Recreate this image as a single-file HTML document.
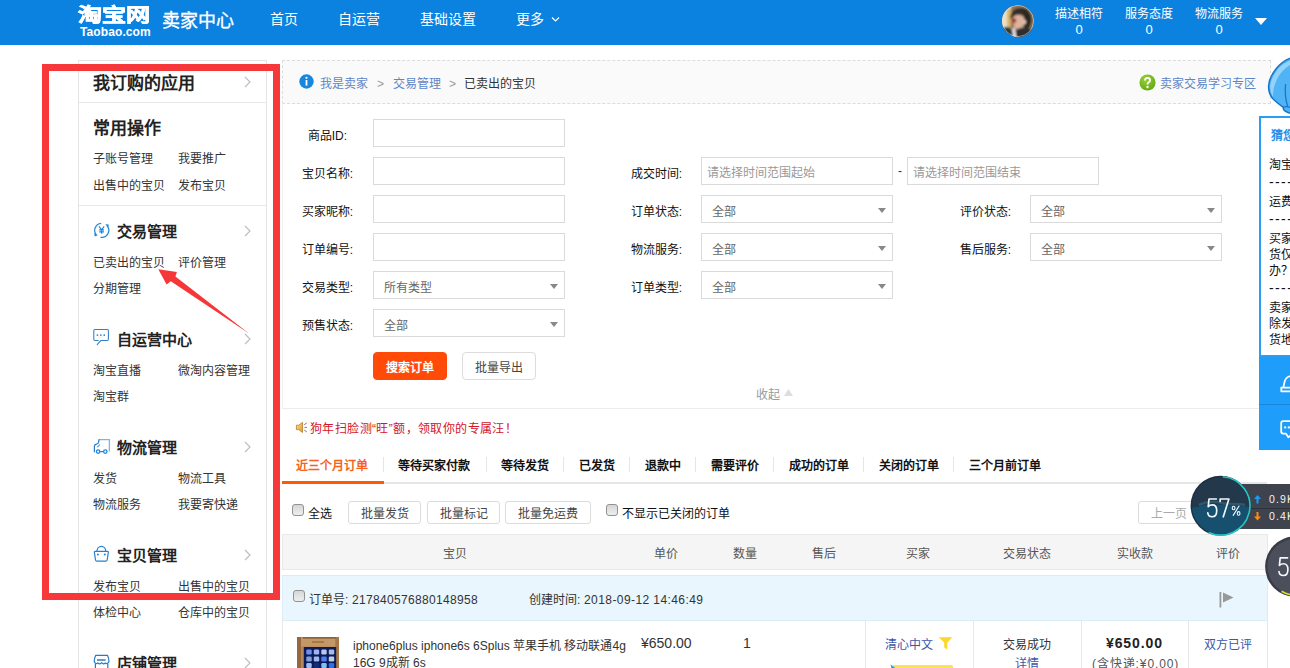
<!DOCTYPE html>
<html lang="zh-CN">
<head>
<meta charset="utf-8">
<title>卖家中心 - 已卖出的宝贝</title>
<style>
*{box-sizing:border-box;margin:0;padding:0}
html,body{width:1290px;height:668px;overflow:hidden;background:#fff}
body{font-family:"Liberation Sans",sans-serif;font-size:12px;color:#333;position:relative}
.abs{position:absolute;white-space:nowrap}
a{text-decoration:none;color:inherit}

/* header */
#hd{position:absolute;left:0;top:0;width:1290px;height:45px;background:#0b82e0;color:#fff}
#hd .logo-cn{left:78px;top:5px;font-size:19px;font-weight:bold;line-height:22px;transform:scaleX(1.27);transform-origin:0 0;-webkit-text-stroke:.6px #fff}
#hd .logo-en{left:80px;top:25px;font-size:12px;font-weight:bold;line-height:14px;letter-spacing:.1px}
#hd .title{left:162px;top:9px;font-size:18px;line-height:24px;-webkit-text-stroke:.35px #fff}
#hd .nav{top:10px;font-size:14px;line-height:18px}
#hd .stat{top:7px;font-size:12px;line-height:14px;text-align:center;width:60px}
#hd .stat b{display:block;font-weight:normal;font-size:13px;line-height:14px;margin-top:2px}
#hd .avatar{left:1002px;top:5px;width:32px;height:32px;border-radius:50%;overflow:hidden;background:#6b5a4e}

/* sidebar */
#side{position:absolute;left:78px;top:60px;width:189px;height:640px;border:1px solid #e4e4e4;background:#fff}
#side .h1{left:14px;font-size:17px;font-weight:bold;color:#222;line-height:20px}
#side .h2{left:38px;font-size:15px;font-weight:bold;color:#222;line-height:18px}
#side .lk{font-size:12px;color:#333;line-height:14px}
#side .c1{left:14px}
#side .c2{left:99px}
#side .hr{position:absolute;left:0;width:187px;height:1px;background:#e8e8e8}
#side .chev{position:absolute;left:164px;width:9px;height:12px}
#side .ico{position:absolute;left:14px;width:17px;height:17px}

/* main */
#crumb{position:absolute;left:282px;top:60px;width:989px;height:44px;background:#fafafa;border:1px dashed #dcdcdc}
#crumb .t{top:16px;font-size:12px;line-height:14px}
#form{position:absolute;left:282px;top:103px;width:986px;height:306px;background:linear-gradient(transparent 1px,#fff 1px);border-left:1px solid #f0f0f0;border-bottom:1px solid #ececec}
.lab{position:absolute;width:72px;text-align:right;font-size:12px;color:#111;line-height:14px;white-space:nowrap}
.inp{position:absolute;height:28px;border:1px solid #dadada;background:#fff;font-size:12px;color:#666;line-height:26px;padding-left:10px;white-space:nowrap}
.inp.ph{color:#999;padding-left:5px;line-height:30px}
.inp.sel{line-height:32px}
.inp.sel:after{content:"";position:absolute;right:6px;top:12px;border:4px solid transparent;border-top:5px solid #888;border-bottom:0}
.btn{position:absolute;height:28px;line-height:30px;text-align:center;border:1px solid #dcdcdc;border-radius:4px;background:#fff;color:#444;font-size:12px;white-space:nowrap}
.btn.pri{background:#ff4a08;border-color:#ff4a08;color:#fff}

/* tabs / toolbar / table */
#notice{position:absolute;left:295px;top:422px;letter-spacing:.4px;font-size:12px;line-height:15px;color:#d4142c;white-space:nowrap}
.tab{position:absolute;top:458px;font-size:12px;font-weight:bold;color:#111;line-height:16px;white-space:nowrap}
.tab.on{color:#f6621d}
.tsep{position:absolute;top:457px;width:1px;height:15px;background:#e6e6e6}
.cb{position:absolute;width:12px;height:12px;border:1px solid #929292;border-radius:3px;background:linear-gradient(#d6d6d6,#eeeeee)}
.sbtn{position:absolute;top:501px;height:23px;line-height:25px;border:1px solid #dcdcdc;border-radius:3px;background:#fff;color:#444;font-size:12px;text-align:center;white-space:nowrap}
.th{position:absolute;top:547px;font-size:12px;color:#555;line-height:14px;white-space:nowrap}
.td{position:absolute;font-size:12px;color:#333;line-height:14px;white-space:nowrap}
.lnk{color:#3a57ab}
</style>
</head>
<body>

<!-- ===== header ===== -->
<div id="hd">
  <div class="abs logo-cn">淘宝网</div>
  <div class="abs logo-en">Taobao.com</div>
  <div class="abs title">卖家中心</div>
  <div class="abs nav" style="left:270px">首页</div>
  <div class="abs nav" style="left:338px">自运营</div>
  <div class="abs nav" style="left:420px">基础设置</div>
  <div class="abs nav" style="left:516px">更多</div>
  <svg class="abs" style="left:551px;top:16px" width="9" height="7" viewBox="0 0 9 7"><path d="M1 1.5 L4.5 5 L8 1.5" fill="none" stroke="#fff" stroke-width="1.2"/></svg>
  <div class="abs avatar">
    <svg width="32" height="32" viewBox="0 0 32 32">
      <defs><filter id="bl" x="-20%" y="-20%" width="140%" height="140%"><feGaussianBlur stdDeviation="0.9"/></filter></defs>
      <rect width="32" height="32" fill="#8a7458"/>
      <g filter="url(#bl)">
        <rect x="-2" y="-2" width="11" height="30" fill="#eadfc6"/>
        <rect x="5" y="4" width="4" height="20" fill="#d9b46a"/>
        <rect x="23" y="6" width="12" height="18" fill="#8c7452"/>
        <path d="M8 14 C8 3 22 0 27 7 C31 12 30 20 26 24 L22 22 L20 10 L10 12 Z" fill="#2b2521"/>
        <ellipse cx="16.5" cy="16" rx="6" ry="8" fill="#dcb39c"/>
        <path d="M10 9 C14 5 20 5 23 9 L22 12 C18 9 14 9 10 13 Z" fill="#3a2e28"/>
        <ellipse cx="22.5" cy="17" rx="1.6" ry="2.2" fill="#e7c8b6"/>
        <path d="M-2 26 C6 22 10 24 14 25 L18 23 C24 22 30 24 34 27 V34 H-2 Z" fill="#2f2f33"/>
        <path d="M10 24 L13 22 L14.5 33 H11 Z" fill="#eadfe6"/>
        <rect x="-1" y="22" width="9" height="10" fill="#2e3a30"/>
        <circle cx="12" cy="15.5" r="2.3" fill="#a3202f"/>
        <circle cx="11.5" cy="17.5" r="1.5" fill="#c05060"/>
      </g>
      <circle cx="16" cy="16" r="15.6" fill="none" stroke="#d9ecfb" stroke-width=".8" opacity=".7"/>
    </svg>
  </div>
  <div class="abs stat" style="left:1049px">描述相符<b>0</b></div>
  <div class="abs stat" style="left:1119px">服务态度<b>0</b></div>
  <div class="abs stat" style="left:1189px">物流服务<b>0</b></div>
  <svg class="abs" style="left:1255px;top:18px" width="12" height="7" viewBox="0 0 12 7"><path d="M0 0 H12 L6 7 Z" fill="#fff"/></svg>
</div>

<!-- ===== sidebar ===== -->
<div id="side">
  <div class="abs h1" style="top:13px">我订购的应用</div>
  <svg class="chev" style="top:15px" viewBox="0 0 9 12"><path d="M2 1 L7 6 L2 11" fill="none" stroke="#bbb" stroke-width="1.1"/></svg>
  <div class="hr" style="top:41px"></div>

  <div class="abs h1" style="top:58px">常用操作</div>
  <div class="abs lk c1" style="top:91px">子账号管理</div><div class="abs lk c2" style="top:91px">我要推广</div>
  <div class="abs lk c1" style="top:118px">出售中的宝贝</div><div class="abs lk c2" style="top:118px">发布宝贝</div>
  <div class="hr" style="top:144px"></div>

  <svg style="position:absolute;left:13px;top:159px" width="20" height="20" viewBox="92 220 20 20"><path d="M101.2 223.4 A7.0 7.0 0 0 0 96.2 234.7" fill="none" stroke="#1f86da" stroke-width="1.2"/><path d="M107.1 225.9 A7.0 7.0 0 0 1 100.5 237.3" fill="none" stroke="#1f86da" stroke-width="1.2"/><path d="M94.4 232.8 L97.8 235.2 L94.6 236.4 Z M105.3 224.3 L108.8 224.4 L108.2 227.7 Z" fill="#1f86da"/><path d="M99 226.4 L101.6 229.8 L104.2 226.4 M101.6 229.8 V233.8 M99.2 229.9 H104 M99.2 231.8 H104" fill="none" stroke="#1f86da" stroke-width="1.15"/></svg>
  <div class="abs h2" style="top:162px">交易管理</div>
  <svg class="chev" style="top:164px" viewBox="0 0 9 12"><path d="M2 1 L7 6 L2 11" fill="none" stroke="#bbb" stroke-width="1.1"/></svg>
  <div class="abs lk c1" style="top:195px">已卖出的宝贝</div><div class="abs lk c2" style="top:195px">评价管理</div>
  <div class="abs lk c1" style="top:221px">分期管理</div>

  <svg style="position:absolute;left:13px;top:266px" width="20" height="20" viewBox="92 327 20 20"><path d="M98.2 340.4 H95 Q93.8 340.4 93.8 339.2 V330.7 Q93.8 329.5 95 329.5 H107.2 Q108.4 329.5 108.4 330.7 V339.2 Q108.4 340.4 107.2 340.4 H101 L97.2 344.6" fill="none" stroke="#2f7fc6" stroke-width="1.05" stroke-linejoin="round" stroke-linecap="round"/><rect x="96.7" y="334.4" width="1.5" height="1.5" fill="#2f7fc6"/><rect x="100.1" y="334.4" width="1.5" height="1.5" fill="#2f7fc6"/><rect x="103.5" y="334.4" width="1.5" height="1.5" fill="#2f7fc6"/></svg>
  <div class="abs h2" style="top:270px">自运营中心</div>
  <svg class="chev" style="top:272px" viewBox="0 0 9 12"><path d="M2 1 L7 6 L2 11" fill="none" stroke="#bbb" stroke-width="1.1"/></svg>
  <div class="abs lk c1" style="top:303px">淘宝直播</div><div class="abs lk c2" style="top:303px">微淘内容管理</div>
  <div class="abs lk c1" style="top:329px">淘宝群</div>

  <svg style="position:absolute;left:13px;top:375px" width="20" height="20" viewBox="92 436 20 20"><path d="M99 439.6 H109.4 V451.4" fill="none" stroke="#7db6e6" stroke-width="1.3"/><path d="M99 439.6 L98.6 442.4 Q98.4 443.4 97.4 443.8 L95.4 444.6 Q94.4 445.1 94.4 446.2 V451.8" fill="none" stroke="#2a7cc6" stroke-width="1.2" stroke-linecap="round"/><path d="M99.6 444.4 Q99.4 447 96.8 447 Q98.6 446.4 99.6 444.4 Z" fill="#3f9be8" stroke="#3f9be8" stroke-width=".6"/><circle cx="98.1" cy="451.6" r="1.7" fill="none" stroke="#1f86da" stroke-width="1.3"/><circle cx="105.3" cy="451.6" r="1.7" fill="none" stroke="#1f86da" stroke-width="1.3"/><path d="M99.8 451.6 H103.6" stroke="#1f86da" stroke-width="1.2"/></svg>
  <div class="abs h2" style="top:378px">物流管理</div>
  <svg class="chev" style="top:380px" viewBox="0 0 9 12"><path d="M2 1 L7 6 L2 11" fill="none" stroke="#bbb" stroke-width="1.1"/></svg>
  <div class="abs lk c1" style="top:411px">发货</div><div class="abs lk c2" style="top:411px">物流工具</div>
  <div class="abs lk c1" style="top:437px">物流服务</div><div class="abs lk c2" style="top:437px">我要寄快递</div>

  <svg style="position:absolute;left:13px;top:483px" width="20" height="20" viewBox="92 544 20 20"><path d="M95.2 551.4 H107.5 Q108.5 551.4 108.3 552.4 L107.2 560 Q107 561.2 105.8 561.2 H96.9 Q95.7 561.2 95.5 560 L94.4 552.4 Q94.2 551.4 95.2 551.4 Z" fill="none" stroke="#2380d2" stroke-width="1.2" stroke-linejoin="round"/><path d="M97 551 A4.35 4.6 0 0 1 105.7 551" fill="none" stroke="#2380d2" stroke-width="1.2"/><circle cx="97.9" cy="554.6" r="1" fill="#2380d2"/><circle cx="104.8" cy="554.6" r="1" fill="#2380d2"/></svg>
  <div class="abs h2" style="top:486px">宝贝管理</div>
  <svg class="chev" style="top:488px" viewBox="0 0 9 12"><path d="M2 1 L7 6 L2 11" fill="none" stroke="#bbb" stroke-width="1.1"/></svg>
  <div class="abs lk c1" style="top:519px">发布宝贝</div><div class="abs lk c2" style="top:519px">出售中的宝贝</div>
  <div class="abs lk c1" style="top:545px">体检中心</div><div class="abs lk c2" style="top:545px">仓库中的宝贝</div>

  <svg style="position:absolute;left:13px;top:591px" width="20" height="20" viewBox="92 652 20 20"><path d="M95.6 655.4 H107.6 Q109 658.5 109 661.6 Q107.6 664.6 105.3 663 Q103.4 664.8 101.6 662.6 Q99.8 664.8 97.9 663 Q95.6 664.6 94.2 661.6 Q94.2 658.5 95.6 655.4 Z" fill="none" stroke="#2a78c2" stroke-width="1.2" stroke-linejoin="round"/><path d="M97 660 H105.6" stroke="#2a78c2" stroke-width="1.5"/><path d="M95.4 664 V670 M107.8 664 V670" stroke="#2a78c2" stroke-width="1.2"/></svg>
  <div class="abs h2" style="top:594px">店铺管理</div>
  <svg class="chev" style="top:596px" viewBox="0 0 9 12"><path d="M2 1 L7 6 L2 11" fill="none" stroke="#bbb" stroke-width="1.1"/></svg>
</div>

<!-- ===== breadcrumb ===== -->
<div id="crumb">
  <svg class="abs" style="left:16px;top:13px" width="15" height="15" viewBox="0 0 15 15"><circle cx="7.5" cy="7.5" r="7.2" fill="#1787dd"/><rect x="6.6" y="6" width="1.8" height="5.6" fill="#fff"/><circle cx="7.5" cy="3.8" r="1.1" fill="#fff"/></svg>
  <div class="abs t" style="left:37px;color:#5d86c6">我是卖家</div>
  <div class="abs t" style="left:94px;color:#999">&gt;</div>
  <div class="abs t" style="left:110px;color:#5d86c6">交易管理</div>
  <div class="abs t" style="left:166px;color:#999">&gt;</div>
  <div class="abs t" style="left:181px;color:#333">已卖出的宝贝</div>
  <svg class="abs" style="left:856px;top:13px" width="17" height="17" viewBox="0 0 16 16"><defs><radialGradient id="gq" cx=".4" cy=".3" r=".8"><stop offset="0" stop-color="#9ad235"/><stop offset="1" stop-color="#5da513"/></radialGradient></defs><circle cx="8" cy="8" r="7.6" fill="url(#gq)"/><path d="M5.6 6.2 Q5.6 3.6 8 3.6 Q10.4 3.6 10.4 5.8 Q10.4 7.2 8.9 8 Q8 8.5 8 9.8" fill="none" stroke="#fff" stroke-width="1.7"/><circle cx="8" cy="12.2" r="1.1" fill="#fff"/></svg>
  <div class="abs t" style="left:877px;color:#5d86c6">卖家交易学习专区</div>
</div>

<!-- ===== search form ===== -->
<div id="form">
  <div class="lab" style="left:-8px;top:26px">商品ID:</div>
  <div class="inp" style="left:90px;top:16px;width:192px"></div>
  <div class="lab" style="left:-2px;top:64px">宝贝名称:</div>
  <div class="inp" style="left:90px;top:54px;width:192px"></div>
  <div class="lab" style="left:-2px;top:102px">买家昵称:</div>
  <div class="inp" style="left:90px;top:92px;width:192px"></div>
  <div class="lab" style="left:-2px;top:140px">订单编号:</div>
  <div class="inp" style="left:90px;top:130px;width:192px"></div>
  <div class="lab" style="left:-2px;top:178px">交易类型:</div>
  <div class="inp sel" style="left:90px;top:168px;width:192px">所有类型</div>
  <div class="lab" style="left:-2px;top:216px">预售状态:</div>
  <div class="inp sel" style="left:90px;top:206px;width:192px">全部</div>
  <div class="lab" style="left:327px;top:64px">成交时间:</div>
  <div class="inp ph" style="left:418px;top:54px;width:192px">请选择时间范围起始</div>
  <div class="abs" style="left:615px;top:61px;color:#333">-</div>
  <div class="inp ph" style="left:624px;top:54px;width:192px">请选择时间范围结束</div>
  <div class="lab" style="left:327px;top:102px">订单状态:</div>
  <div class="inp sel" style="left:418px;top:92px;width:192px">全部</div>
  <div class="lab" style="left:327px;top:140px">物流服务:</div>
  <div class="inp sel" style="left:418px;top:130px;width:192px">全部</div>
  <div class="lab" style="left:327px;top:178px">订单类型:</div>
  <div class="inp sel" style="left:418px;top:168px;width:192px">全部</div>
  <div class="lab" style="left:656px;top:102px">评价状态:</div>
  <div class="inp sel" style="left:747px;top:92px;width:192px">全部</div>
  <div class="lab" style="left:656px;top:140px">售后服务:</div>
  <div class="inp sel" style="left:747px;top:130px;width:192px">全部</div>
  <div class="btn pri" style="left:90px;top:249px;width:74px;font-weight:bold">搜索订单</div>
  <div class="btn" style="left:179px;top:249px;width:74px">批量导出</div>
  <div class="abs" style="left:473px;top:285px;color:#999;line-height:14px">收起</div>
  <svg class="abs" style="left:501px;top:286px" width="9" height="7" viewBox="0 0 9 7"><path d="M0 7 H9 L4.5 0 Z" fill="#ddd"/></svg>
</div>

<!-- ===== notice ===== -->
<svg class="abs" style="left:295px;top:420px" width="14" height="15" viewBox="295 420 14 15"><defs><linearGradient id="sp" x1="0" y1="0" x2="1" y2="1"><stop offset="0" stop-color="#ffe08a"/><stop offset="1" stop-color="#e8951c"/></linearGradient></defs><path d="M296.4 425.2 H298.7 L302.5 422.3 V432.5 L298.7 429.6 H296.4 Z" fill="url(#sp)" stroke="#a9741f" stroke-width=".7" stroke-linejoin="round"/><path d="M304.2 424.8 L306.8 422.9 M304.5 427.4 H307 M304.2 430 L306.8 431.9" stroke="#555" stroke-width=".8" fill="none"/></svg>
<div id="notice" style="left:310px">狗年扫脸测“旺”额，领取你的专属汪！</div>

<!-- ===== tabs ===== -->
<div style="position:absolute;left:282px;top:482px;width:985px;height:2px;background:#e6e6e6"></div>
<div style="position:absolute;left:282px;top:481px;width:102px;height:3px;background:#ff5a00"></div>
<div class="tab on" style="left:296px">近三个月订单</div>
<div class="tsep" style="left:383px"></div>
<div class="tab" style="left:398px">等待买家付款</div>
<div class="tsep" style="left:486px"></div>
<div class="tab" style="left:501px">等待发货</div>
<div class="tsep" style="left:563px"></div>
<div class="tab" style="left:579px">已发货</div>
<div class="tsep" style="left:629px"></div>
<div class="tab" style="left:645px">退款中</div>
<div class="tsep" style="left:695px"></div>
<div class="tab" style="left:711px">需要评价</div>
<div class="tsep" style="left:773px"></div>
<div class="tab" style="left:789px">成功的订单</div>
<div class="tsep" style="left:863px"></div>
<div class="tab" style="left:879px">关闭的订单</div>
<div class="tsep" style="left:953px"></div>
<div class="tab" style="left:969px">三个月前订单</div>

<!-- ===== toolbar ===== -->
<div class="cb" style="left:292px;top:504px"></div>
<div class="td" style="left:308px;top:507px;color:#111">全选</div>
<div class="sbtn" style="left:348px;width:73px">批量发货</div>
<div class="sbtn" style="left:427px;width:73px">批量标记</div>
<div class="sbtn" style="left:505px;width:86px">批量免运费</div>
<div class="cb" style="left:606px;top:504px"></div>
<div class="td" style="left:622px;top:507px;color:#111">不显示已关闭的订单</div>
<div class="sbtn" style="left:1138px;width:62px;color:#aaa">上一页</div>

<!-- ===== table header ===== -->
<div style="position:absolute;left:282px;top:534px;width:986px;height:36px;background:#f5f5f5;border:1px solid #e8e8e8"></div>
<div class="th" style="left:443px">宝贝</div>
<div class="th" style="left:654px">单价</div>
<div class="th" style="left:733px">数量</div>
<div class="th" style="left:812px">售后</div>
<div class="th" style="left:906px">买家</div>
<div class="th" style="left:1003px">交易状态</div>
<div class="th" style="left:1117px">实收款</div>
<div class="th" style="left:1216px">评价</div>

<!-- ===== order row ===== -->
<div style="position:absolute;left:282px;top:575px;width:986px;height:46px;background:#eaf6fd;border:1px solid #d9ecf8"></div>
<div class="cb" style="left:293px;top:590px"></div>
<div class="td" style="left:309px;top:593px">订单号:</div><div class="td" style="left:352px;top:593px;letter-spacing:.32px">217840576880148958</div>
<div class="td" style="left:529px;top:593px">创建时间:</div><div class="td" style="left:584px;top:593px;letter-spacing:.42px">2018-09-12 14:46:49</div>
<svg class="abs" style="left:1219px;top:591px" width="15" height="17" viewBox="0 0 15 17"><rect x="0.5" y="1" width="1.8" height="15.5" fill="#999"/><path d="M4 1.5 L14.5 6.5 L4 11.5 Z" fill="#999"/></svg>

<div style="position:absolute;left:282px;top:620px;width:986px;height:60px;border:1px solid #e8e8e8;border-top:0"></div>
<div style="position:absolute;left:865px;top:621px;width:1px;height:50px;background:#e8e8e8"></div>
<div style="position:absolute;left:973px;top:621px;width:1px;height:50px;background:#e8e8e8"></div>
<div style="position:absolute;left:1081px;top:621px;width:1px;height:50px;background:#e8e8e8"></div>
<div style="position:absolute;left:1188px;top:621px;width:1px;height:50px;background:#e8e8e8"></div>

<div style="position:absolute;left:297px;top:637px;width:42px;height:40px;background:#b98a5c;overflow:hidden">
  <svg width="42" height="40" viewBox="297 637 42 40"><defs><filter id="b2" x="-10%" y="-10%" width="120%" height="120%"><feGaussianBlur stdDeviation="0.55"/></filter></defs>
  <rect x="297" y="637" width="42" height="40" fill="#b78859"/>
  <g filter="url(#b2)"><rect x="296" y="636" width="5" height="42" fill="#96673f"/><rect x="335.5" y="636" width="4" height="42" fill="#a67848"/><rect x="301" y="638.5" width="34" height="8" fill="#c39868"/><rect x="303" y="637" width="33" height="1.6" fill="#8e6038"/><rect x="312" y="641" width="12" height="2" fill="#a87a40"/>
  <rect x="303.8" y="647" width="32.4" height="32" fill="#0b1c58"/><rect x="306.3" y="649.5" width="5.4" height="5" rx="1.2" fill="#6f8ff0"/><rect x="313.8" y="649.5" width="5.4" height="5" rx="1.2" fill="#9fb2f2"/><rect x="321.3" y="649.5" width="5.4" height="5" rx="1.2" fill="#b8c8ea"/><rect x="328.8" y="649.5" width="5.4" height="5" rx="1.2" fill="#a8bce0"/><rect x="306.3" y="656.5" width="5.4" height="5" rx="1.2" fill="#7f9fd8"/><rect x="313.8" y="656.5" width="5.4" height="5" rx="1.2" fill="#9fb6ee"/><rect x="321.3" y="656.5" width="5.4" height="5" rx="1.2" fill="#4f7df0"/><rect x="328.8" y="656.5" width="5.4" height="5" rx="1.2" fill="#b8d0e0"/><rect x="306.3" y="663.0" width="5.4" height="5" rx="1.2" fill="#9fbdf2"/><rect x="313.8" y="663.0" width="5.4" height="5" rx="1.2" fill="#0f2f7a"/><rect x="321.3" y="663.0" width="5.4" height="5" rx="1.2" fill="#7fc0f0"/><rect x="328.8" y="663.0" width="5.4" height="5" rx="1.2" fill="#2f6fe8"/></g></svg>
</div>
<div class="td" style="left:353px;top:638px;line-height:17px">iphone6plus iphone6s 6Splus 苹果手机 移动联通4g<br>16G 9成新 6s</div>
<div class="td" style="left:641px;top:636px;font-size:14px">¥650.00</div>
<div class="td" style="left:743px;top:636px;font-size:14px">1</div>
<div class="td lnk" style="left:885px;top:638px">清心中文</div>
<svg class="abs" style="left:938px;top:636px" width="16" height="15" viewBox="938 636 16 15"><path d="M938.8 637.2 H952.3 L947.3 642.8 V649.6 L944.2 647.6 V642.8 Z" fill="#fbd62f"/></svg>
<div style="position:absolute;left:892px;top:665px;width:61px;height:10px;border-radius:2px;background:#fbe356"></div>
<svg class="abs" style="left:890px;top:664px" width="8" height="6" viewBox="0 0 8 6"><path d="M0.5 0.5 L6 4.5 L2 6 Z" fill="#2d8fe6"/></svg>
<div class="td" style="left:1003px;top:638px">交易成功</div>
<div class="td lnk" style="left:1015px;top:657px">详情</div>
<div class="td" style="left:1106px;top:636px;font-size:14px;font-weight:bold;color:#222;letter-spacing:.9px">¥650.00</div>
<div class="td" style="left:1092px;top:657px;color:#555;letter-spacing:.9px">(含快递:¥0.00)</div>
<div class="td lnk" style="left:1204px;top:638px">双方已评</div>

<!-- ===== right floating widgets ===== -->
<svg class="abs" style="left:1262px;top:50px;z-index:20" width="28" height="70" viewBox="1262 50 28 70">
  <path d="M1292 57.6 C1286 59.5 1280 64 1275.9 68.9 C1272 74 1269 80 1268.6 85.7 C1268.4 91 1270 95.5 1272.9 98.8 C1276 102 1280 105 1283 107.2 C1283 110 1286 113 1292 113.4 Z" fill="#50b3f5" stroke="#1a76c8" stroke-width="1.5" stroke-linejoin="round"/>
  <path d="M1290 60.5 C1284 63 1279 67 1276.5 71 C1273 76 1270.6 81 1270.2 86 C1270.2 90 1271 94 1273 97 C1272.6 86 1278 72 1290 65 Z" fill="#93d2fa"/>
  <path d="M1285.6 84 C1284.8 92 1285.6 100 1287.6 106" fill="none" stroke="#1a76c8" stroke-width="1.3"/>
  <path d="M1283 107.2 C1286 106.2 1288 106.4 1291 107.4" fill="none" stroke="#1a76c8" stroke-width="1.3"/>
</svg>
<div style="position:absolute;left:1259px;top:116px;width:40px;height:241px;border:2px solid #2a9df4;background:#fff;z-index:21"></div>
<div class="abs" style="left:1271px;top:129px;font-size:12px;font-weight:bold;color:#2a8fe8;line-height:14px;z-index:22">猜您</div>
<div class="abs" style="left:1269px;top:158px;font-size:12px;color:#111;line-height:14px;z-index:22">淘宝</div>
<div class="abs" style="left:1269px;top:175px;font-size:14px;color:#111;line-height:14px;letter-spacing:1.4px;z-index:22">----</div>
<div class="abs" style="left:1269px;top:195px;font-size:12px;color:#111;line-height:14px;z-index:22">运费</div>
<div class="abs" style="left:1269px;top:212px;font-size:14px;color:#111;line-height:14px;letter-spacing:1.4px;z-index:22">----</div>
<div class="abs" style="left:1269px;top:232px;font-size:12px;color:#111;line-height:14px;z-index:22">买家</div>
<div class="abs" style="left:1269px;top:248px;font-size:12px;color:#111;line-height:14px;z-index:22">货仅</div>
<div class="abs" style="left:1269px;top:264px;font-size:12px;color:#111;line-height:14px;z-index:22">办？</div>
<div class="abs" style="left:1269px;top:281px;font-size:14px;color:#111;line-height:14px;letter-spacing:1.4px;z-index:22">----</div>
<div class="abs" style="left:1269px;top:301px;font-size:12px;color:#111;line-height:14px;z-index:22">卖家</div>
<div class="abs" style="left:1269px;top:317px;font-size:12px;color:#111;line-height:14px;z-index:22">除发</div>
<div class="abs" style="left:1269px;top:333px;font-size:12px;color:#111;line-height:14px;z-index:22">货地</div>
<div style="position:absolute;left:1259px;top:357px;width:40px;height:93px;background:#1e9dfb;z-index:21"></div>
<div style="position:absolute;left:1259px;top:404px;width:40px;height:1px;background:#1a86dd;z-index:22"></div>
<svg class="abs" style="left:1276px;top:370px;z-index:22" width="14" height="72" viewBox="1276 370 14 72">
  <path d="M1291 376 C1287 376.5 1285 379 1284.3 383 L1283.3 387.6 H1281.3 V391.3 H1291 M1283.3 387.6 H1291" fill="none" stroke="#fff" stroke-width="1.8" stroke-linejoin="round"/>
  <path d="M1291 421.2 H1283.2 Q1281.2 421.2 1281.2 423.2 V431.6 Q1281.2 433.6 1283.2 433.6 H1286 L1288.3 437.4 L1291 435" fill="none" stroke="#fff" stroke-width="1.8" stroke-linejoin="round"/>
  <rect x="1284.2" y="426.4" width="2" height="2" fill="#fff"/><rect x="1287.8" y="426.4" width="2" height="2" fill="#fff"/>
</svg>

<!-- speed ball -->
<div style="position:absolute;left:1240px;top:484px;width:60px;height:45px;background:#3e434e;z-index:30"></div>
<div style="position:absolute;left:1250px;top:508px;width:50px;height:1px;background:#2e323b;z-index:31"></div>
<svg class="abs" style="left:1254px;top:495px;z-index:31" width="7" height="9" viewBox="0 0 7 9"><path d="M3.5 0 L7 4 H4.5 V8.5 H2.5 V4 H0 Z" fill="#1e9bf0"/></svg>
<svg class="abs" style="left:1254px;top:512px;z-index:31" width="7" height="9" viewBox="0 0 7 9"><path d="M3.5 8.5 L7 4.5 H4.5 V0 H2.5 V4.5 H0 Z" fill="#f58a1f"/></svg>
<div class="abs" style="left:1269px;top:493px;font-size:10.5px;color:#f4f4f4;line-height:12px;letter-spacing:1.1px;z-index:31">0.9K</div>
<div class="abs" style="left:1269px;top:510px;font-size:10.5px;color:#f4f4f4;line-height:12px;letter-spacing:1.1px;z-index:31">0.4K</div>
<svg class="abs" style="left:1189px;top:474px;z-index:32" width="64" height="64" viewBox="1189 474 64 64" role="img" aria-label="57%">
  <defs><clipPath id="cc"><circle cx="1220.6" cy="505.8" r="28.6"/></clipPath></defs>
  <circle cx="1220.6" cy="505.8" r="30" fill="#1d2f41"/>
  <g clip-path="url(#cc)"><rect x="1189" y="474" width="64" height="36" fill="#24384b"/><path d="M1189 508 C1198 507.5 1204 505 1212 504.5 C1222 504 1232 507 1240 506.5 C1246 506 1250 507 1253 507.5 V540 H1189 Z" fill="#17506f"/><path d="M1199 505 C1206 501.5 1214 501 1222 503 C1230 505 1238 503 1245 505" fill="none" stroke="#2f617a" stroke-width="2.6" opacity=".75"/></g>
  <path d="M1222.8 476.7 A29.2 29.2 0 1 1 1208.6 532.4" fill="none" stroke="#25c6c8" stroke-width="1.6"/>
  <g fill="none" stroke="#f2f8fc" stroke-width="1.65" stroke-linejoin="round" stroke-linecap="round">
    <path transform="translate(1207 498.2)" d="M9.4 0.8 H2 L1.2 8.4 C2.4 7.2 3.8 6.7 5.3 6.7 C8.2 6.7 9.7 8.9 9.7 12.5 C9.7 16.3 8.1 18.5 5.2 18.5 C2.7 18.5 1.1 17 0.8 14.6"/>
    <path transform="translate(1219.4 498.2)" d="M0.7 3.4 V0.8 H9.5 L3.9 18.6"/>
    <g stroke-width="1.1"><ellipse cx="1233.6" cy="508" rx="1.35" ry="1.8"/><ellipse cx="1238.6" cy="513.4" rx="1.35" ry="1.8"/><path d="M1239 506 L1233.2 515.4"/></g>
  </g>
</svg>
<div class="abs" style="left:1206px;top:493px;font-size:27px;line-height:30px;color:transparent;z-index:33;opacity:0">57%</div>

<svg class="abs" style="left:1262px;top:534px;z-index:32" width="30" height="66" viewBox="1262 534 30 66" role="img" aria-label="5">
  <circle cx="1295.3" cy="566.6" r="30.2" fill="#393c46"/>
  <circle cx="1295.3" cy="566.6" r="27.8" fill="#4b4f5c"/>
  <path d="M1281.5 591.2 A28.6 28.6 0 0 0 1292 595" fill="none" stroke="#d8dc3a" stroke-width="1.8"/>
  <path transform="translate(1278.2 557)" d="M9.4 0.8 H2 L1.2 8.4 C2.4 7.2 3.8 6.7 5.3 6.7 C8.2 6.7 9.7 8.9 9.7 12.5 C9.7 16.3 8.1 18.5 5.2 18.5 C2.7 18.5 1.1 17 0.8 14.6" fill="none" stroke="#f2f8fc" stroke-width="1.65" stroke-linejoin="round" stroke-linecap="round"/>
</svg>

<!-- ===== annotation overlay ===== -->
<div id="redbox" style="position:absolute;left:42px;top:64px;width:238px;height:536px;border:7px solid #f6383a;z-index:50"></div>
<svg style="position:absolute;left:150px;top:260px;z-index:51" width="110" height="85" viewBox="150 260 110 85"><polygon points="158.3,269.2 176.9,272 175.4,276.4 249.4,333.8 170.8,281.2 166.6,284.6" fill="#f5373a"/></svg>

</body>
</html>
